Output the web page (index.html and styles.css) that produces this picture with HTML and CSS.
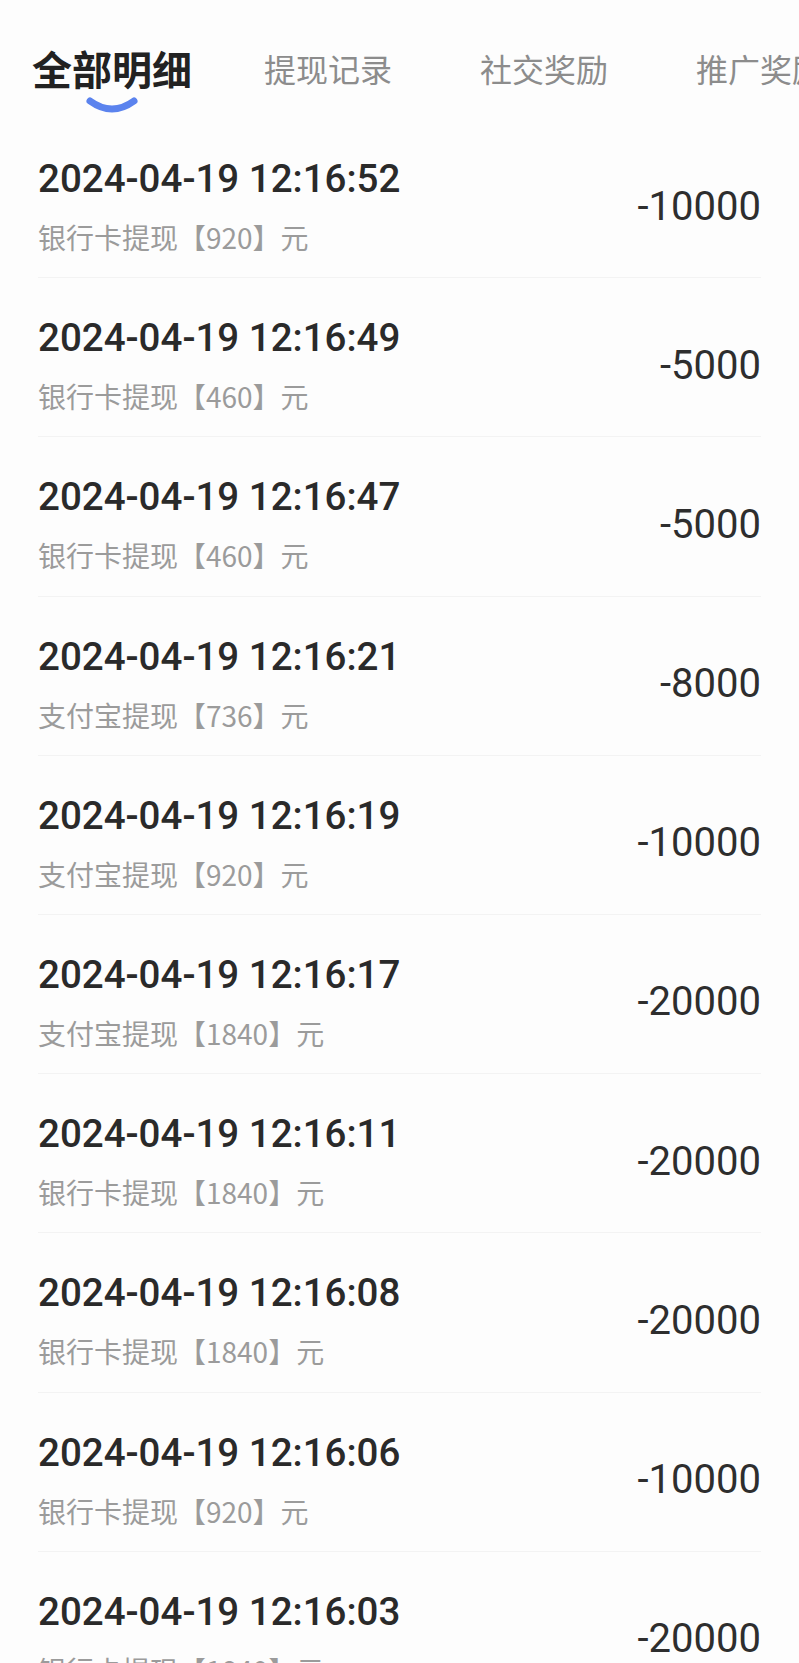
FILE: index.html
```html
<!DOCTYPE html>
<html lang="zh-CN">

<head>
    <meta charset="UTF-8" />
    <meta name="viewport" content="width=device-width, initial-scale=1.0" />
    <title>全部明细</title>
    <link rel="stylesheet" href="styles.css">
</head>

<body>
    <div class="tabs">
        <div class="tab active">
            <span class="tab-text">全部明细</span>
            <svg class="tab-mark" width="54" height="18" viewBox="0 0 54 18">
                <path d="M5 5 Q27 21 49 5" fill="none" stroke="#5b83ee" stroke-width="7" stroke-linecap="round" />
            </svg>
        </div>
        <div class="tab"><span class="tab-text">提现记录</span></div>
        <div class="tab"><span class="tab-text">社交奖励</span></div>
        <div class="tab"><span class="tab-text">推广奖励</span></div>
    </div>

    <div class="list">
        <div class="row">
            <div class="info">
                <div class="time">2024-04-19 12:16:52</div>
                <div class="desc">银行卡提现【920】元</div>
            </div>
            <div class="amount">-10000</div>
        </div>
        <div class="row">
            <div class="info">
                <div class="time">2024-04-19 12:16:49</div>
                <div class="desc">银行卡提现【460】元</div>
            </div>
            <div class="amount">-5000</div>
        </div>
        <div class="row">
            <div class="info">
                <div class="time">2024-04-19 12:16:47</div>
                <div class="desc">银行卡提现【460】元</div>
            </div>
            <div class="amount">-5000</div>
        </div>
        <div class="row">
            <div class="info">
                <div class="time">2024-04-19 12:16:21</div>
                <div class="desc">支付宝提现【736】元</div>
            </div>
            <div class="amount">-8000</div>
        </div>
        <div class="row">
            <div class="info">
                <div class="time">2024-04-19 12:16:19</div>
                <div class="desc">支付宝提现【920】元</div>
            </div>
            <div class="amount">-10000</div>
        </div>
        <div class="row">
            <div class="info">
                <div class="time">2024-04-19 12:16:17</div>
                <div class="desc">支付宝提现【1840】元</div>
            </div>
            <div class="amount">-20000</div>
        </div>
        <div class="row">
            <div class="info">
                <div class="time">2024-04-19 12:16:11</div>
                <div class="desc">银行卡提现【1840】元</div>
            </div>
            <div class="amount">-20000</div>
        </div>
        <div class="row">
            <div class="info">
                <div class="time">2024-04-19 12:16:08</div>
                <div class="desc">银行卡提现【1840】元</div>
            </div>
            <div class="amount">-20000</div>
        </div>
        <div class="row">
            <div class="info">
                <div class="time">2024-04-19 12:16:06</div>
                <div class="desc">银行卡提现【920】元</div>
            </div>
            <div class="amount">-10000</div>
        </div>
        <div class="row">
            <div class="info">
                <div class="time">2024-04-19 12:16:03</div>
                <div class="desc">银行卡提现【1840】元</div>
            </div>
            <div class="amount">-20000</div>
        </div>
    </div>
</body>

</html>
```

FILE: styles.css
```css
body {
    margin: 0;
    background-color: #fdfdfd;
    font-family: Roboto, "Noto Sans CJK SC", sans-serif;
    overflow: hidden;
}

.tabs {
    display: flex;
    height: 119px;
    padding: 40px 0 0 4px;
    box-sizing: border-box;
    overflow: hidden;
    white-space: nowrap;
}

.tab {
    flex: 0 0 216px;
    display: flex;
    flex-direction: column;
    align-items: center;
}

.tab-text {
    font-family: "Noto Sans CJK SC", sans-serif;
    font-size: 32px;
    line-height: 56px;
    color: #8c8c8c;
}

.tab.active .tab-text {
    font-size: 40px;
    font-weight: 700;
    color: #222;
}

.tab-mark {
    display: block;
    margin-top: 0;
}

.list {
    padding: 0 38px;
}

.row {
    display: flex;
    align-items: center;
    justify-content: space-between;
    padding: 38px 0 22.2px;
    border-bottom: 1px solid #f3f3f3;
}

.time {
    font-size: 38.5px;
    font-weight: 500;
    line-height: 44px;
    color: #2a2a2a;
}

.desc {
    margin-top: 18px;
    font-family: "Noto Sans CJK SC", sans-serif;
    font-size: 28px;
    line-height: 36px;
    color: #9b9b9b;
}

.amount {
    font-size: 40px;
    font-weight: 400;
    color: #2e2e2e;
}
```
